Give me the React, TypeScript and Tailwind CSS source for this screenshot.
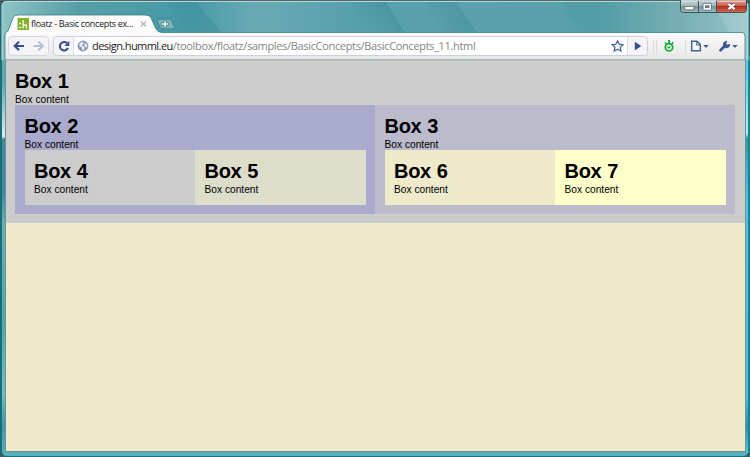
import type { ReactNode } from 'react';

type BoxProps = { n: number; className: string; children?: ReactNode };

function Box({ n, className, children }: BoxProps) {
  return (
    <section className={className}>
      <h2 className="h-[25px] text-[20px] font-bold leading-6 tracking-[-0.3px] [word-spacing:0.6px]">Box {n}</h2>
      <p className="h-[11px] whitespace-nowrap text-[10.2px] leading-3">Box content</p>
      {children}
    </section>
  );
}

function TitleBar() {
  return (
    <svg className="absolute left-0 top-0 h-[60px] w-full" viewBox="0 0 750 60">
      <defs>
        <linearGradient id="glass" x1="0" x2="1" y1="0" y2="0">
          <stop offset="0" stopColor="#8ec4c6" />
          <stop offset="0.1" stopColor="#579fa7" />
          <stop offset="0.25" stopColor="#459aa5" />
          <stop offset="0.34" stopColor="#6aaab5" />
          <stop offset="0.47" stopColor="#58a0ad" />
          <stop offset="0.65" stopColor="#5ca1ae" />
          <stop offset="0.8" stopColor="#57a0aa" />
          <stop offset="0.9" stopColor="#81b4b9" />
          <stop offset="1" stopColor="#a4cbd0" />
        </linearGradient>
        <linearGradient id="streak" x1="0" x2="1" y1="0.4" y2="0">
          <stop offset="0" stopColor="#34838e" stopOpacity="0" />
          <stop offset="1" stopColor="#34838e" stopOpacity="0.55" />
        </linearGradient>
        <linearGradient id="bar" x1="0" x2="0" y1="0" y2="1">
          <stop offset="0" stopColor="#fff" />
          <stop offset="0.4" stopColor="#fbfbfb" />
          <stop offset="1" stopColor="#e6e6e7" />
        </linearGradient>
        <linearGradient id="grey" x1="0" x2="0" y1="0" y2="1">
          <stop offset="0" stopColor="#c4d3d5" />
          <stop offset="0.45" stopColor="#a4b9bc" />
          <stop offset="0.5" stopColor="#75949a" />
          <stop offset="1" stopColor="#a1bdc2" />
        </linearGradient>
        <linearGradient id="red" x1="0" x2="0" y1="0" y2="1">
          <stop offset="0" stopColor="#dda196" />
          <stop offset="0.45" stopColor="#cb6252" />
          <stop offset="0.5" stopColor="#b22c1b" />
          <stop offset="1" stopColor="#d26b4f" />
        </linearGradient>
      </defs>
      <path d="M2 60V6Q2 1 7 1H743Q748 1 748 6V60Z" fill="url(#glass)" />
      <path d="M165 2H196L222 33H185Z" fill="url(#streak)" />
      <path d="M350 2H386L405 33H360Z" fill="url(#streak)" />
      <path d="M425 2H456L477 33H432Z" fill="url(#streak)" />
      <path d="M560 2L580 33H730L710 2Z" fill="#398c96" opacity="0.15" />
      <path d="M2 60V6Q2 1.5 7 1.5H743Q748 1.5 748 6V60" fill="none" stroke="#b2dadd" />
      <path d="M0 .5H750" stroke="#526669" />
      <path d="M5 60V35Q5 32 8 31L13 18Q14 15 18 15H145Q150 15 151 18L156 29Q158 32.5 162 32.5H742Q745 32.5 745 36V60Z" fill="url(#bar)" stroke="#357f88" strokeWidth=".8" />
      <path d="M159 19H169Q171 19 172 21L175 28Q175.500 29 174 29H163Q161 29 160 27L157 21Q156 19 159 19Z" fill="#78b3b9" stroke="#3b838c" />
      <path d="M165 20.500v7M161.500 24h7" stroke="#407b83" strokeWidth="3" />
      <path d="M165 21v6M162 24h6" stroke="#eef8f7" strokeWidth="1.500" />

      <rect x="17.500" y="18" width="11.500" height="12" fill="#84b02c" />
      <path d="M19 23.500h2M19 27.500h2M23.200 20v8.500M23.200 25h3.200v3.500" fill="none" stroke="#f1f8df" strokeWidth="1.400" />
      <path d="M141 21.500l5 5m0-5l-5 5" stroke="#b4b4b4" strokeWidth="1.200" />

      <path d="M680.500 0V9.500Q680.500 12.500 683.500 12.500H716.500V0Z" fill="url(#grey)" />
      <path d="M716.500 0H746.500V9.500Q746.500 12.500 743.500 12.500H716.500Z" fill="url(#red)" />
      <path d="M680.500 0V9.500Q680.500 12.500 683.500 12.500H743.500Q746.500 12.500 746.500 9.500V0M698.500 1V12M716.500 1V12" fill="none" stroke="#3a565b" />
      <path d="M681.500 1.500H697.500M699.500 1.500H715.500M717.500 1.500H745.500" stroke="#d4dfe0" opacity=".8" />
      <rect x="684.800" y="6.500" width="9" height="3.300" rx=".5" fill="#fff" stroke="#5b6b70" strokeWidth=".8" />
      <rect x="703" y="3.300" width="8.500" height="6.900" rx=".5" fill="#fff" stroke="#50636b" strokeWidth=".8" />
      <rect x="705.500" y="5.700" width="3.500" height="2" fill="#80999e" stroke="#50636b" strokeWidth=".8" />
      <path d="M728.500 4l6 5.200m0-5.200l-6 5.200" stroke="#65434a" strokeWidth="3.600" />
      <path d="M728.500 4l6 5.200m0-5.200l-6 5.200" stroke="#fff" strokeWidth="2.200" />

      <rect x="8.500" y="36.500" width="40" height="19" rx="3" fill="#f4f4f6" stroke="#d4d7e3" />
      <path d="M24 46H15M19 41.700L14.700 46L19 50.300" fill="none" stroke="#354f8b" strokeWidth="2.100" />
      <path d="M33.500 46H42.500M38.500 41.700L42.800 46L38.500 50.300" fill="none" stroke="#b4bfd7" strokeWidth="2.100" />
      <rect x="53.500" y="36.500" width="594" height="19" rx="3" fill="#f5f5f8" stroke="#ccd1df" />
      <path d="M73.500 37H627.500V55H73.500Z" fill="#fff" />
      <path d="M73.500 37V55M627.500 37V55" stroke="#d9dde8" />
      <path d="M67 43.200A4.200 4.200 0 1 0 68 47.800" fill="none" stroke="#344e87" strokeWidth="2.100" />
      <path d="M69.300 41v5h-5z" fill="#344e87" />
      <circle cx="83" cy="46" r="4.900" fill="#8a9cc0" stroke="#7c91b5" strokeWidth="1" />
      <path d="M79.500 43.500l2.500-1.700 1.500.7-.5 1.800-1.500.7 1.700 1.200 1.500 1.500-1.200 2.500-1.200-.3-.4-2.500-2.600-1.600zM85 43l2 1.500.3 2.700-1.800-.3-1.200-2z" fill="#edf1f8" />
      <path d="M617.600 40.800l1.600 3.400 3.800.5-2.800 2.600.7 3.800-3.300-1.900-3.400 1.900.7-3.800-2.700-2.600 3.700-.5z" fill="#fff" stroke="#4d6799" strokeWidth="1.300" />
      <path d="M634.800 41.700V50.500L641.300 46.100Z" fill="#344f89" />
      <path d="M653.500 40V54M656.500 40V54M685.500 40V54" stroke="#dadadb" />
      <circle cx="669" cy="47.300" r="3.700" fill="#e9f8e9" stroke="#0baa32" strokeWidth="1.700" />
      <path d="M667.300 46.700l1.500 1.500 1.500-2" fill="none" stroke="#0baa32" strokeWidth="1.100" />
      <path d="M669 40v4M672 43.700l1.300-1.300M666 43.700l-1-1" stroke="#0baa32" strokeWidth="1.800" />
      <path d="M691.700 41.300H697L700.300 44.600V50.700H691.700Z" fill="#f7f9fc" stroke="#44618f" strokeWidth="1.500" />
      <path d="M696.700 41.500V45H700.500" fill="none" stroke="#44618f" />
      <path d="M703.200 45H708.700L706 47.900ZM732.200 45H737.700L735 47.900Z" fill="#405b91" />
      <path d="M720.500 50.300L725 45.800" stroke="#405b91" strokeWidth="2.800" strokeLinecap="round" />
      <path d="M723 45.700q-.8-4.700 4.300-5l-1 3 1 1 3-1q-.4 4.800-5 4.500z" fill="#405b91" />
    </svg>
  );
}

export default function App() {
  return (
    <div className="relative flex h-[457px] w-[750px] flex-col overflow-hidden bg-[#45585d] font-['Liberation_Sans',Arial,sans-serif] text-black">
      <div className="absolute inset-x-0 bottom-0 top-1 rounded-b-md border-x-2 border-b border-t-0 border-[#206b76] bg-[linear-gradient(to_bottom,#70b3b7_0px,#55aab2_78px,#d5ecee_130px,#d5ecee_133px,#388b9f_135px,#408ca3_190px,#62b3b4_220px,#4caab0_320px,#6cc2c8_390px,#3e9baa_420px,#58b3c0_453px)]" />
      <div className="absolute bottom-1 right-0 top-[56px] w-[5px] border-l border-r-2 border-l-[#5e9ba8] border-r-[#16869c] bg-[linear-gradient(to_bottom,#55c8da_0px,#b7e8ed_78px,#3992a1_82px,#55c3d2_140px,#50c0d1_340px,#398f9e_370px,#69c7d2_401px)]" />
      <header className="relative h-[60px] shrink-0">
        <TitleBar />
        <div className="relative h-[33px] pl-[31px] pt-[18px]">
          <span className="block whitespace-nowrap font-['Open_Sans',sans-serif] text-[9px] leading-3 tracking-[-0.33px] text-[#151515]">floatz - Basic concepts ex...</span>
        </div>
        <div className="relative h-[27px] pl-[92px] pt-[5px]">
          <span className="block whitespace-nowrap font-['Open_Sans',sans-serif] text-[11px] leading-4 tracking-[-0.33px] text-[#858585]"><span className="tracking-[-0.55px] text-[#202020]">design.humml.eu</span>/toolbox/floatz/samples/BasicConcepts/BasicConcepts_11.html</span>
        </div>
      </header>
      <main className="relative ml-[5px] mr-[5px] h-[392px] shrink-0 border-b border-l border-[#708f90] bg-[#eeeacb]">
        <Box n={1} className="h-[163px] border-t border-[#bebebe] bg-[#cccccc] px-[9px] pt-2">
          <div className="flex h-[109px]">
            <Box n={2} className="w-[360px] bg-[#aaaacc] pl-[9.5px] pr-[9.5px] pt-[9px]">
              <div className="flex h-[54.5px]">
                <Box n={4} className="w-1/2 bg-[#cccccc] pl-[9.5px] pt-[9px]" />
                <Box n={5} className="w-1/2 bg-[#ddddcc] pl-[9.5px] pt-[9px]" />
              </div>
            </Box>
            <Box n={3} className="w-[360px] bg-[#bbbbcc] px-[9.5px] pt-[9px]">
              <div className="flex h-[54.5px]">
                <Box n={6} className="w-1/2 bg-[#eeeacb] pl-[9.5px] pt-[9px]" />
                <Box n={7} className="w-1/2 bg-[#ffffcc] pl-[9.5px] pt-[9px]" />
              </div>
            </Box>
          </div>
        </Box>
      </main>
    </div>
  );
}
